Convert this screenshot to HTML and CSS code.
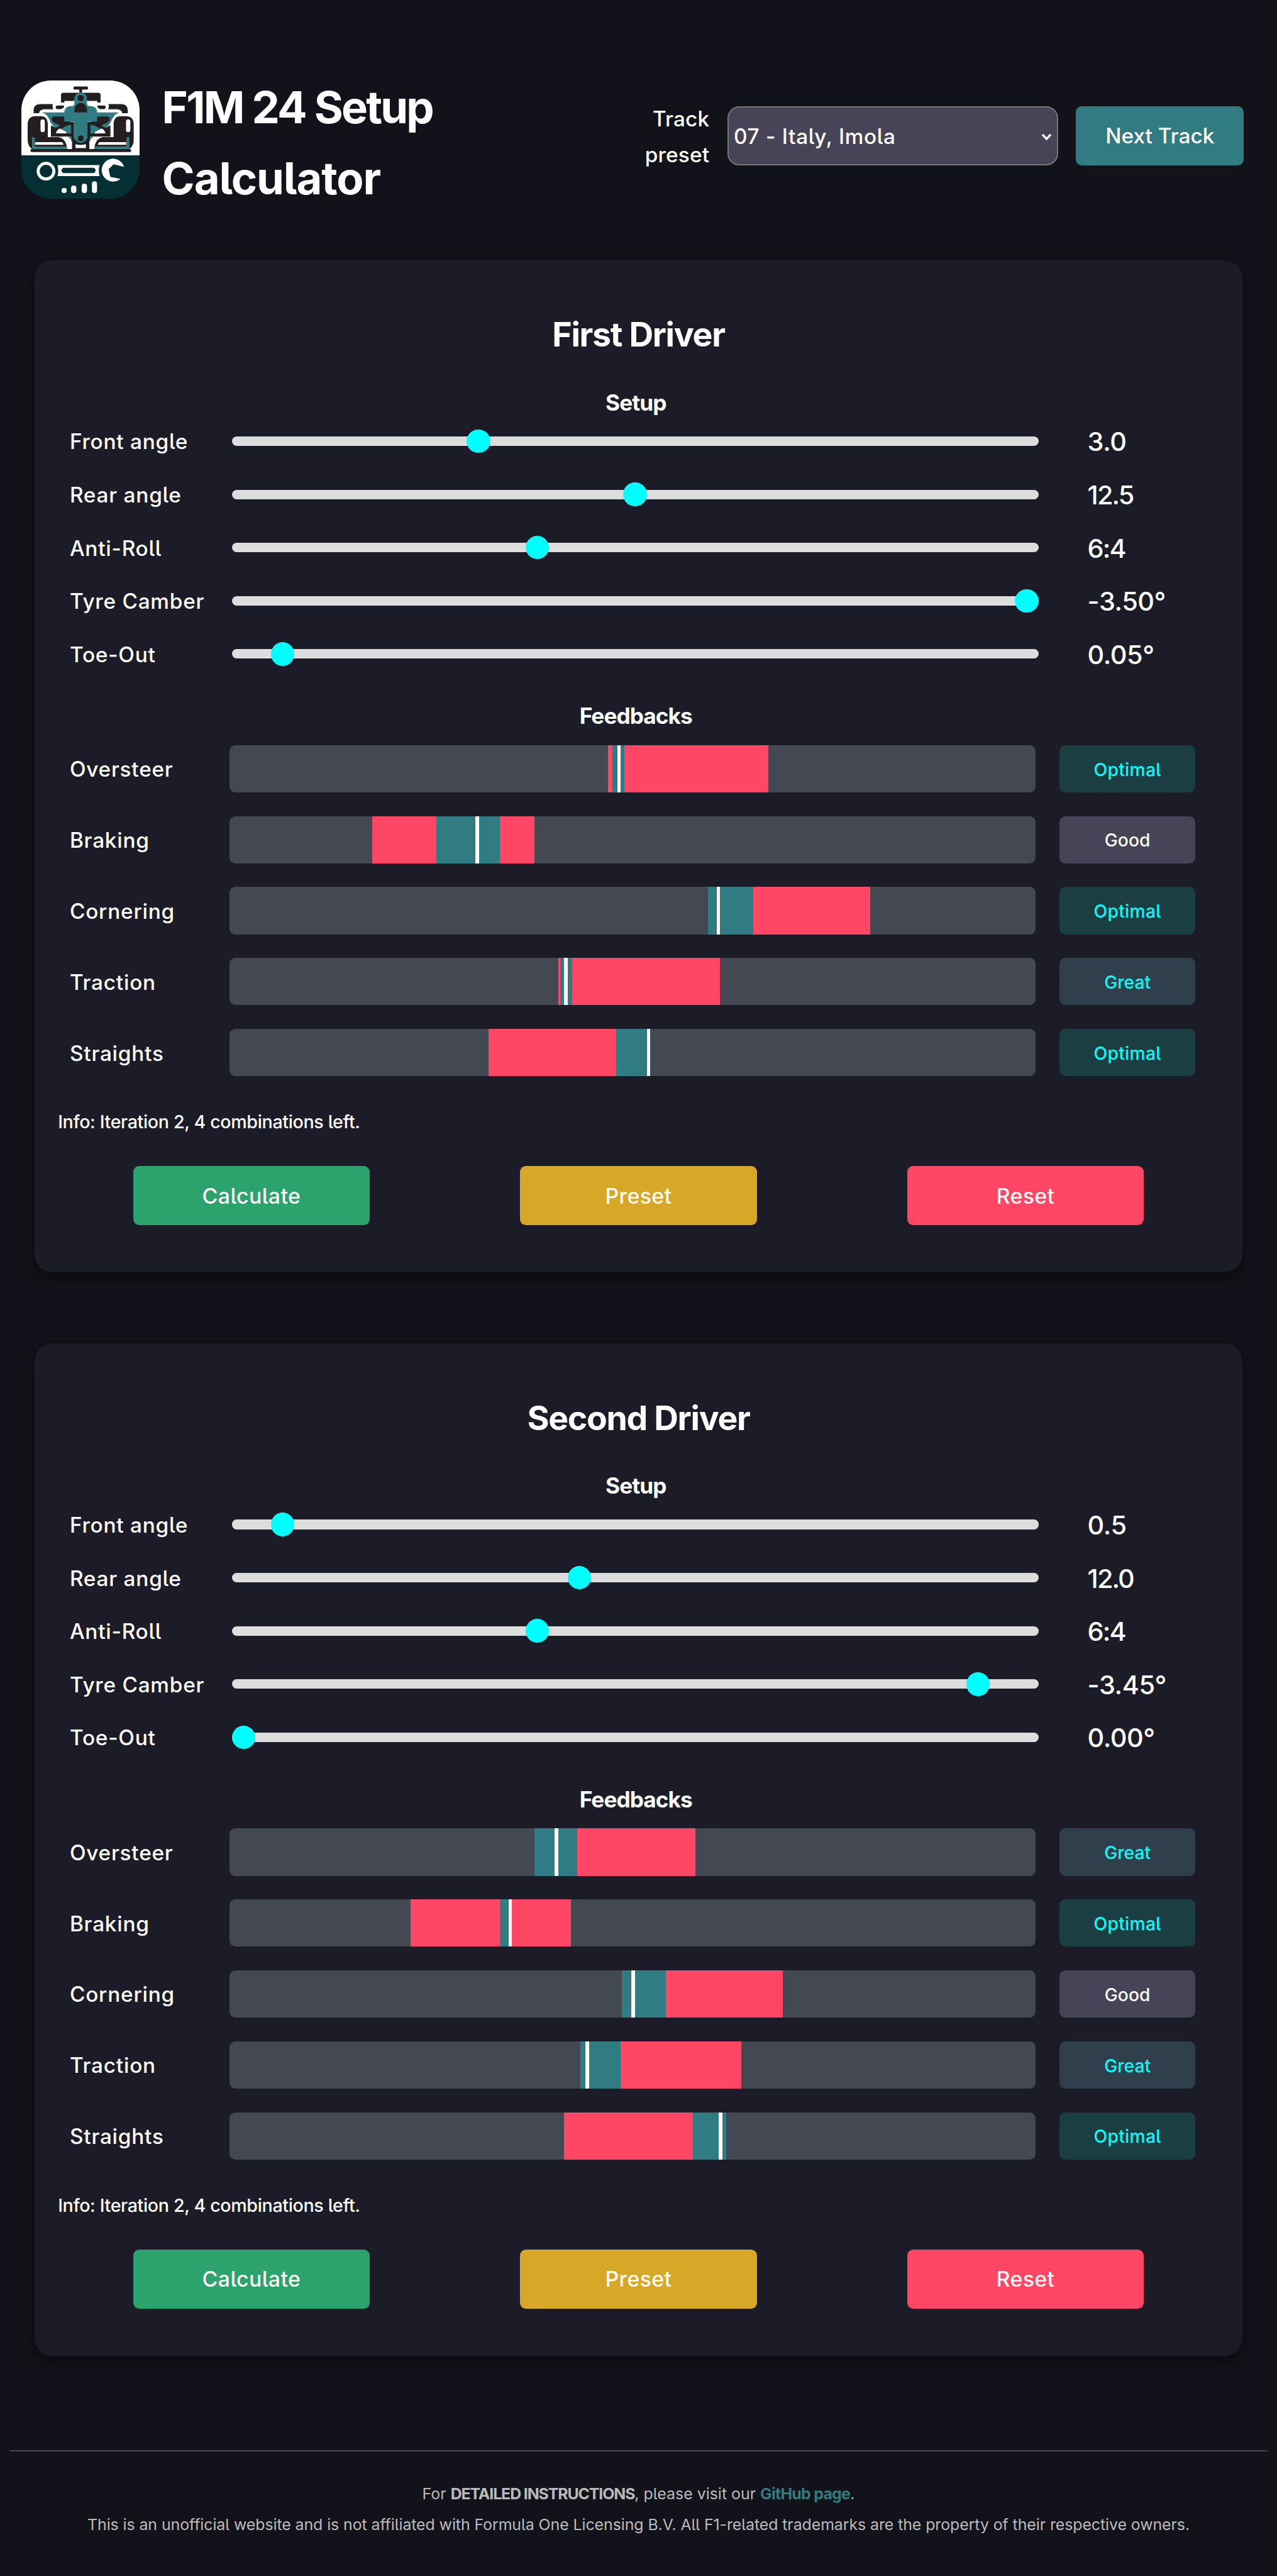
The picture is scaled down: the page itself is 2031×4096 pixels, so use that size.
FILE: index.html
```html
<!DOCTYPE html>
<html lang="en">
<head>
<meta charset="utf-8">
<title>F1M 24 Setup Calculator</title>
<link rel="stylesheet" href="styles.css">
</head>
<body>
<header class="site-header">
  <svg class="logo" viewBox="48 48 600 600" aria-hidden="true">
    <defs>
      <clipPath id="badge"><rect x="48" y="48" width="600" height="600" rx="150"/></clipPath>
      <g id="side">
        <path fill="#231f20" d="M110 214V200Q110 168 144 168H208Q203 180 210 194H162Q140 196 138 214Z"/>
        <path fill="#231f20" d="M222 184Q222 175 232 175H264V186Q256 188 252 193H232Q222 193 222 184Z"/>
        <path fill="#307c82" d="M155 210H300V345L240 300Q200 280 190 245Q176 218 160 214Z"/>
        <path fill="#231f20" d="M212 231H266V254H282L306 262V285L276 296L236 272Q202 262 201 242Q202 233 212 231Z"/>
        <path fill="#231f20" d="M198 275L222 288L277 262L310 258V333H198Z"/>
        <path fill="#fff" d="M223 316Q226 300 243 291L277 308V317Z"/>
        <path fill="#307c82" d="M250 292L277 278L300 272V317H277V307Z"/>
        <path fill="#fff" d="M265 333H306V396H283Q282 352 250 336Z"/>
        <path fill="#307c82" d="M284 333H301V347Z"/>
        <path fill="#231f20" d="M80 268Q82 229 120 229H150Q182 232 182 272V335H236Q276 342 280 396H104Q80 382 80 350Z"/>
        <path fill="#fff" d="M118 361H255Q260 366 262 374H118Z"/>
        <path fill="#307c82" d="M102 335H112Q117 336 117 342V383H277Q280 389 280 396H102Z"/>
        <path fill="#231f20" d="M301 258H315V340Q316 362 324 368V396H305V355H301Z"/>
      </g>
    </defs>
    <g clip-path="url(#badge)">
      <path fill="#fff" d="M48 48H648V428H48Z"/>
      <path fill="#053033" d="M48 428H648V648H48Z"/>
      <rect x="312" y="78" width="74" height="16" rx="7" fill="#231f20"/>
      <path fill="#231f20" d="M342 90H356V114H342Z"/>
      <path fill="#231f20" d="M249 160V122Q249 110 261 110H438Q450 110 450 122V160H433V152H266V160Z"/>
      <path fill="#fff" d="M310 152H388V182H310Z"/>
      <use href="#side"/>
      <use href="#side" transform="matrix(-1 0 0 1 698 0)"/>
      <rect x="145" y="245" width="22" height="65" rx="11" fill="#f7f7fb"/>
      <rect x="579" y="245" width="22" height="65" rx="11" fill="#f7f7fb"/>
      <path fill="#231f20" d="M312 340H386V366Q349 384 312 366ZM306 390H392V398H306Z"/>
      <path fill="#fff" d="M323 373Q349 382 375 373V390H323Z"/>
      <path fill="#307c82" d="M317 140A32 32 0 0 1 381 140V166Q382 178 396 178H404Q432 182 432 208V256H383V330A34 34 0 0 1 315 330V256H266V208Q268 182 294 178H304Q316 178 317 166Z"/>
      <circle cx="349" cy="137" r="16" fill="#231f20"/>
      <path fill="#231f20" d="M317 210V198A32 36 0 0 1 381 198V210Z"/>
      <circle cx="349" cy="341" r="15" fill="#231f20"/>
      <rect x="94" y="396" width="511" height="15" rx="7" fill="#231f20"/>
      <circle cx="173" cy="508" r="40" fill="none" stroke="#fff" stroke-width="15"/>
      <path fill="#fff" fill-rule="evenodd" d="M231 477H445Q437 505 445 533H231Q239 505 231 477ZM265 491A13 13 0 0 0 265 518H411A13 13 0 0 0 411 491Z"/>
      <path fill="#fff" d="M569 486L516 473L491 498L499 537L551 547A58 58 0 1 1 569 486Z"/>
      <rect x="252" y="593" width="26" height="26" rx="13" fill="#fff"/>
      <rect x="300" y="581" width="27" height="38" rx="13" fill="#fff"/>
      <rect x="354" y="571" width="27" height="48" rx="13" fill="#fff"/>
      <rect x="406" y="559" width="26" height="60" rx="13" fill="#fff"/>
    </g>
  </svg>
  <h1 class="site-title"><span class="site-title-lead">F1M 24 Setup</span><br>Calculator</h1>
  <div class="track-picker">
    <span class="track-label">Track<br>preset</span>
    <div class="track-select">
      <span>07 - Italy, Imola</span>
      <svg class="chevron" viewBox="0 0 18 12" aria-hidden="true"><path d="M2 2L9 9.5L16 2" fill="none" stroke="#fff" stroke-width="3.6"/></svg>
    </div>
    <button class="btn btn-next">Next Track</button>
  </div>
</header>

<main class="drivers">
  <section class="driver">
    <h2 class="driver-name">First Driver</h2>
    <h3 class="group-title">Setup</h3>
    <div class="setup-row"><label>Front angle</label><input type="range" max="1000" value="300"><output>3.0</output></div>
    <div class="setup-row"><label>Rear angle</label><input type="range" max="1000" value="500"><output class="tight">12.5</output></div>
    <div class="setup-row"><label>Anti-Roll</label><input type="range" max="1000" value="375"><output class="tight">6:4</output></div>
    <div class="setup-row"><label>Tyre Camber</label><input type="range" max="1000" value="1000"><output>-3.50°</output></div>
    <div class="setup-row"><label>Toe-Out</label><input type="range" max="1000" value="50"><output>0.05°</output></div>
    <h3 class="group-title group-title-feedback">Feedbacks</h3>
    <div class="feedback-row"><span class="feedback-name">Oversteer</span>
      <div class="bar"><i class="bad" style="--from:640;--to:912"></i><i class="ok" style="--from:648;--to:668"></i><i class="mark" style="--from:656"></i></div><span class="badge optimal">Optimal</span></div>
    <div class="feedback-row"><span class="feedback-name">Braking</span>
      <div class="bar"><i class="bad" style="--from:242;--to:516"></i><i class="ok" style="--from:350;--to:458"></i><i class="mark" style="--from:416"></i></div><span class="badge good">Good</span></div>
    <div class="feedback-row"><span class="feedback-name">Cornering</span>
      <div class="bar"><i class="bad" style="--from:810;--to:1084"></i><i class="ok" style="--from:810;--to:886"></i><i class="mark" style="--from:824"></i></div><span class="badge optimal">Optimal</span></div>
    <div class="feedback-row"><span class="feedback-name">Traction</span>
      <div class="bar"><i class="bad" style="--from:556;--to:830"></i><i class="ok" style="--from:560;--to:580"></i><i class="mark" style="--from:566"></i></div><span class="badge great">Great</span></div>
    <div class="feedback-row"><span class="feedback-name">Straights</span>
      <div class="bar"><i class="bad" style="--from:438;--to:712"></i><i class="ok" style="--from:654;--to:712"></i><i class="mark" style="--from:706"></i></div><span class="badge optimal">Optimal</span></div>
    <p class="info">Info: Iteration 2, 4 combinations left.</p>
    <div class="actions"><button class="btn btn-calculate">Calculate</button><button class="btn btn-preset">Preset</button><button class="btn btn-reset">Reset</button></div>
  </section>

  <section class="driver">
    <h2 class="driver-name">Second Driver</h2>
    <h3 class="group-title">Setup</h3>
    <div class="setup-row"><label>Front angle</label><input type="range" max="1000" value="50"><output>0.5</output></div>
    <div class="setup-row"><label>Rear angle</label><input type="range" max="1000" value="429"><output class="tight">12.0</output></div>
    <div class="setup-row"><label>Anti-Roll</label><input type="range" max="1000" value="375"><output class="tight">6:4</output></div>
    <div class="setup-row"><label>Tyre Camber</label><input type="range" max="1000" value="938"><output>-3.45°</output></div>
    <div class="setup-row"><label>Toe-Out</label><input type="range" max="1000" value="0"><output>0.00°</output></div>
    <h3 class="group-title group-title-feedback">Feedbacks</h3>
    <div class="feedback-row"><span class="feedback-name">Oversteer</span>
      <div class="bar"><i class="bad" style="--from:516;--to:788"></i><i class="ok" style="--from:516;--to:588"></i><i class="mark" style="--from:550"></i></div><span class="badge great">Great</span></div>
    <div class="feedback-row"><span class="feedback-name">Braking</span>
      <div class="bar"><i class="bad" style="--from:306;--to:578"></i><i class="ok" style="--from:458;--to:478"></i><i class="mark" style="--from:472"></i></div><span class="badge optimal">Optimal</span></div>
    <div class="feedback-row"><span class="feedback-name">Cornering</span>
      <div class="bar"><i class="bad" style="--from:664;--to:936"></i><i class="ok" style="--from:664;--to:738"></i><i class="mark" style="--from:680"></i></div><span class="badge good">Good</span></div>
    <div class="feedback-row"><span class="feedback-name">Traction</span>
      <div class="bar"><i class="bad" style="--from:594;--to:866"></i><i class="ok" style="--from:594;--to:662"></i><i class="mark" style="--from:602"></i></div><span class="badge great">Great</span></div>
    <div class="feedback-row"><span class="feedback-name">Straights</span>
      <div class="bar"><i class="bad" style="--from:566;--to:840"></i><i class="ok" style="--from:784;--to:840"></i><i class="mark" style="--from:828"></i></div><span class="badge optimal">Optimal</span></div>
    <p class="info">Info: Iteration 2, 4 combinations left.</p>
    <div class="actions"><button class="btn btn-calculate">Calculate</button><button class="btn btn-preset">Preset</button><button class="btn btn-reset">Reset</button></div>
  </section>
</main>

<footer class="site-footer">
  <p>For <strong>DETAILED INSTRUCTIONS</strong>, please visit our <a href="#">GitHub page</a>.</p>
  <p class="legal">This is an unofficial website and is not affiliated with Formula One Licensing B.V. All F1-related trademarks are the property of their respective owners.</p>
</footer>
</body>
</html>
```
FILE: styles.css
```css
:root {
  --bg: #12121a;
  --panel: #1c1c28;
  --teal: #307c82;
  --red: #ff4665;
  --grey: #464456;
  font-size: 9.4028px;
}

* { box-sizing: border-box; }

body {
  margin: 0;
  background: var(--bg);
  color: #fff;
  font-family: Inter, "Noto Sans", sans-serif;
  font-size: 3.55rem;
  font-weight: 500;
  font-feature-settings: "cv05";
}

h1, h2, h3, p { margin: 0; }

/* Header */
.site-header {
  display: flex;
  align-items: flex-start;
  height: 44rem;
  padding: 13.6rem 5.6rem 0 3.6rem;
}

.logo { flex: none; width: 20rem; height: 20rem; }

.site-title {
  margin: -1.4rem 0 0 3.8rem;
  font-size: 7.5rem;
  line-height: 12rem;
  font-weight: 650;
  letter-spacing: -.016em;
  white-space: nowrap;
}
.site-title-lead { letter-spacing: -.04em; }

.track-picker {
  display: flex;
  align-items: center;
  gap: 3rem;
  height: 18.8rem;
  margin-left: auto;
}

.track-label {
  margin-top: .3rem;
  line-height: 6rem;
  text-align: right;
  letter-spacing: .006em;
}

.track-select {
  display: flex;
  align-items: center;
  justify-content: space-between;
  width: 56rem;
  height: 10rem;
  padding: .2rem .9rem 0 .9rem;
  border: 2px solid #767676;
  border-radius: 2rem;
  background: var(--grey);
  letter-spacing: .021em;
}
.chevron { width: 1.8rem; height: 1.2rem; }

.btn {
  height: 10rem;
  padding: 0;
  border: 0;
  border-radius: 1rem;
  color: #fffcf8;
  font: inherit;
  font-feature-settings: inherit;
  font-size: 3.6rem;
  letter-spacing: .012em;
}
.btn-next { width: 28.4rem; background: var(--teal); font-size: 3.55rem; letter-spacing: 0; }

/* Driver panels */
.drivers { display: grid; gap: 12rem; padding: 0 5.8rem; }

.driver {
  height: 171.2rem;
  padding: 8rem 4rem;
  border-radius: 3rem;
  background: var(--panel);
  box-shadow: 0 .8rem 2.4rem rgba(0, 0, 0, .5);
}

.driver-name {
  font-size: 5.7rem;
  line-height: 9.2rem;
  height: 9.3rem;
  font-weight: 670;
  letter-spacing: -.025em;
  text-align: center;
}

.group-title {
  height: 4rem;
  margin-top: 4.8rem;
  padding-right: .9rem;
  font-size: 3.75rem;
  line-height: 4.1rem;
  font-weight: 700;
  letter-spacing: -.027em;
  text-align: center;
}
.group-title-feedback { height: 5.8rem; margin-top: 3.1rem; line-height: 5.9rem; }

.setup-row, .feedback-row { display: grid; align-items: center; padding-left: 2rem; }
.setup-row { grid-template-columns: 27.4rem 136.45rem 1fr; height: 9rem; }
.feedback-row { grid-template-columns: 27rem 136.4rem 23rem; height: 12rem; }

.setup-row label, .feedback-name { padding-top: .2rem; letter-spacing: .023em; }

.setup-row input {
  appearance: none;
  width: 100%;
  height: 1.6rem;
  margin: 0;
  border-radius: .8rem;
  background: #ddd;
}
.setup-row input::-webkit-slider-thumb {
  appearance: none;
  width: 4rem;
  height: 4rem;
  border-radius: 50%;
  background: #0ff;
}

.setup-row output {
  padding: .2rem 0 0 8.3rem;
  font-size: 4.4rem;
  font-weight: 450;
  letter-spacing: -.01em;
}
.setup-row .tight { letter-spacing: -.045em; }

.bar {
  position: relative;
  height: 8rem;
  overflow: hidden;
  border-radius: 1rem;
  background: #444852;
}
.bar i {
  position: absolute;
  top: 0;
  bottom: 0;
  left: calc(var(--from) * .1rem);
  width: calc((var(--to) - var(--from)) * .1rem);
}
.bar .bad { background: var(--red); }
.bar .ok { background: var(--teal); }
.bar .mark { width: .6rem; background: #fffcf8; }

.badge {
  margin-left: 4rem;
  width: 23rem;
  height: 8rem;
  padding-top: .2rem;
  border-radius: 1rem;
  font-size: 3rem;
  line-height: 7.9rem;
  text-align: center;
}
.optimal { background: #1b3e42; color: #0ff; letter-spacing: .012em; }
.great { background: #2f3f4b; color: #0ff; }
.good { background: var(--grey); }

.info {
  margin: 2.8rem 0 4.4rem;
  font-size: 3.05rem;
  line-height: 6rem;
  letter-spacing: -.013em;
}

.actions { display: flex; justify-content: space-around; }
.actions .btn { width: 40rem; }
.btn-calculate { background: #2ca26c; }
.btn-preset { background: #d7a828; }
.btn-reset { background: var(--red); }

/* Footer */
.site-footer {
  margin: 16rem 1.6rem 0;
  padding-top: 4.5rem;
  border-top: 2px solid var(--grey);
  color: #bbb;
  font-size: 2.65rem;
  line-height: 5.2rem;
  font-weight: 400;
  text-align: center;
}
.site-footer strong { font-weight: 700; letter-spacing: -.045em; }
.site-footer a { color: var(--teal); font-weight: 700; letter-spacing: -.03em; text-decoration: none; }
.legal { letter-spacing: -.0035em; }
```
